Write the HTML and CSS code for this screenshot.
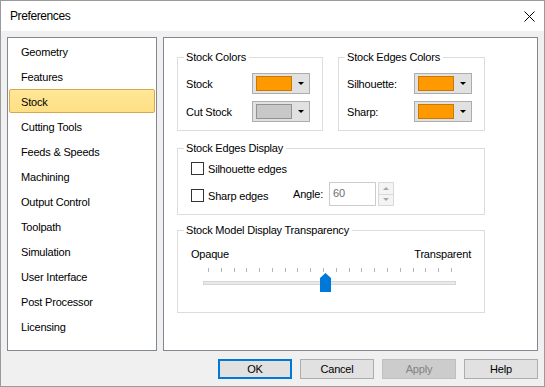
FILE: index.html
```html
<!DOCTYPE html>
<html>

<head>
    <meta charset="utf-8" />
    <title>Preferences</title>
    <link rel="stylesheet" href="styles.css">
</head>

<body>
    <div class="window">
        <div class="titlebar">
            <span class="title">Preferences</span>
            <svg class="close" width="11" height="11" viewBox="0 0 11 11">
                <path d="M0.5 0.5 L10.5 10.5 M10.5 0.5 L0.5 10.5" stroke="#000" stroke-width="1" fill="none" />
            </svg>
        </div>

        <div class="main">
            <ul class="nav">
                <li class="nav-item">Geometry</li>
                <li class="nav-item">Features</li>
                <li class="nav-item nav-item-active">Stock</li>
                <li class="nav-item">Cutting Tools</li>
                <li class="nav-item">Feeds &amp; Speeds</li>
                <li class="nav-item">Machining</li>
                <li class="nav-item">Output Control</li>
                <li class="nav-item">Toolpath</li>
                <li class="nav-item">Simulation</li>
                <li class="nav-item">User Interface</li>
                <li class="nav-item">Post Processor</li>
                <li class="nav-item">Licensing</li>
            </ul>

            <div class="pane">
                <div class="pane-row">
                    <div class="group group-colors">
                        <div class="group-title">Stock Colors</div>
                        <div class="field">
                            <span class="field-label">Stock</span>
                            <div class="color-pick"><span class="swatch swatch-orange"></span><span class="caret"></span></div>
                        </div>
                        <div class="field">
                            <span class="field-label">Cut Stock</span>
                            <div class="color-pick"><span class="swatch swatch-gray"></span><span class="caret"></span></div>
                        </div>
                    </div>

                    <div class="group group-colors group-edge-colors">
                        <div class="group-title">Stock Edges Colors</div>
                        <div class="field">
                            <span class="field-label">Silhouette:</span>
                            <div class="color-pick"><span class="swatch swatch-orange"></span><span class="caret"></span></div>
                        </div>
                        <div class="field">
                            <span class="field-label">Sharp:</span>
                            <div class="color-pick"><span class="swatch swatch-orange"></span><span class="caret"></span></div>
                        </div>
                    </div>
                </div>

                <div class="group group-display">
                    <div class="group-title">Stock Edges Display</div>
                    <label class="check">
                        <span class="check-box"></span>
                        <span>Silhouette edges</span>
                    </label>
                    <div class="angle-row">
                        <label class="check check-sharp">
                            <span class="check-box"></span>
                            <span>Sharp edges</span>
                        </label>
                        <span class="angle-label">Angle:</span>
                        <div class="angle-input">60</div>
                        <div class="spin">
                            <span class="spin-btn"><span class="spin-up"></span></span>
                            <span class="spin-btn"><span class="spin-down"></span></span>
                        </div>
                    </div>
                </div>

                <div class="group group-transparency">
                    <div class="group-title">Stock Model Display Transparency</div>
                    <div class="range-labels">
                        <span>Opaque</span>
                        <span>Transparent</span>
                    </div>
                    <div class="slider">
                        <div class="ticks">
                            <i></i><i></i><i></i><i></i><i></i><i></i><i></i><i></i><i></i><i></i>
                            <i></i><i></i><i></i><i></i><i></i><i></i><i></i><i></i><i></i><i></i>
                        </div>
                        <div class="track"></div>
                        <svg class="thumb" width="11" height="19" viewBox="0 0 11 19">
                            <path d="M5.5 0 L11 5 L11 19 L0 19 L0 5 Z" fill="#0078d7" />
                        </svg>
                    </div>
                </div>
            </div>
        </div>

        <div class="buttons">
            <button class="btn btn-default">OK</button>
            <button class="btn">Cancel</button>
            <button class="btn btn-disabled">Apply</button>
            <button class="btn">Help</button>
        </div>
    </div>
</body>

</html>
```

FILE: styles.css
```css
body {
    margin: 0;
    font-family: "Liberation Sans", Arial, sans-serif;
    font-size: 11px;
    letter-spacing: -0.2px;
    color: #000;
}

.window {
    width: 545px;
    height: 387px;
    box-sizing: border-box;
    border: 1px solid #9a9a9a;
    background-color: #f0f0f0;
}

.titlebar {
    height: 30px;
    display: flex;
    align-items: center;
    justify-content: space-between;
    padding: 0 9px 0 9px;
    background-color: #fff;
}

.title {
    font-size: 12px;
    letter-spacing: -0.4px;
}

.close {
    display: block;
}

.main {
    display: flex;
    gap: 6px;
    padding: 6px 6px 0 6px;
    height: 314px;
}

.nav {
    list-style: none;
    margin: 0;
    padding: 1px 1px 0 1px;
    width: 150px;
    box-sizing: border-box;
    border: 1px solid #828790;
    background-color: #fff;
}

.nav-item {
    height: 24px;
    line-height: 24px;
    margin-bottom: 1px;
    padding-left: 11px;
    border: 1px solid transparent;
    box-sizing: border-box;
    border-radius: 2px;
}

.nav-item-active {
    background: linear-gradient(#ffe797, #fedf84);
    border-color: #dba651;
}

.pane {
    width: 375px;
    box-sizing: border-box;
    border: 1px solid #828790;
    background-color: #fff;
    padding: 19px 0 0 13px;
}

.pane-row {
    display: flex;
    gap: 15px;
    margin-bottom: 17px;
}

.group {
    border: 1px solid #dcdcdc;
    box-sizing: border-box;
    width: 308px;
}

.group-title {
    display: table;
    line-height: 13px;
    margin: -7px 0 0 6px;
    padding: 0 3px 0 2px;
    background-color: #fff;
}

/* color groups */
.group-colors {
    width: 146px;
    padding: 0 0 8px 8px;
}

.group-edge-colors {
    width: 147px;
}

.group-colors .group-title {
    margin-left: -2px;
    margin-bottom: 9px;
}

.field {
    display: flex;
    align-items: center;
    height: 21px;
}

.field + .field {
    margin-top: 7px;
}

.field-label {
    width: 66px;
}

.group-edge-colors .field-label {
    width: 67px;
}

.color-pick {
    width: 58px;
    height: 21px;
    box-sizing: border-box;
    border: 1px solid #adadad;
    background-color: #e1e1e1;
    display: flex;
    align-items: center;
    padding-left: 3px;
}

.swatch {
    width: 36px;
    height: 15px;
    box-sizing: border-box;
    border: 1px solid;
}

.swatch-orange {
    background-color: #ff9900;
    border-color: #c67a08;
}

.swatch-gray {
    background-color: #c8c8c8;
    border-color: #929292;
}

.caret {
    margin-left: 6px;
    border-left: 3px solid transparent;
    border-right: 3px solid transparent;
    border-top: 3px solid #000;
}

/* edges display */
.group-display {
    padding: 0 0 8px 13px;
    margin-bottom: 15px;
}

.group-display .group-title {
    margin-left: -7px;
    margin-bottom: 7px;
}

.check {
    display: flex;
    align-items: center;
    height: 13px;
}

.check-box {
    width: 13px;
    height: 13px;
    box-sizing: border-box;
    border: 1px solid #333;
    background-color: #fff;
    margin-right: 4px;
}

.angle-row {
    display: flex;
    align-items: center;
    height: 24px;
    margin-top: 7px;
}

.check-sharp {
    width: 102px;
    margin-top: 3px;
}

.angle-label {
    width: 36px;
}

.angle-input {
    width: 47px;
    height: 24px;
    box-sizing: border-box;
    border: 1px solid #cccccc;
    background-color: #fff;
    color: #6d6d6d;
    line-height: 20px;
    padding-left: 3px;
}

.spin {
    margin-left: 2px;
    width: 16px;
    height: 24px;
    display: flex;
    flex-direction: column;
}

.spin-btn {
    flex: 1;
    border: 1px solid #d9d9d9;
    background-color: #f4f4f4;
    display: flex;
    align-items: center;
    justify-content: center;
}

.spin-btn + .spin-btn {
    border-top: none;
}

.spin-up {
    border-left: 3px solid transparent;
    border-right: 3px solid transparent;
    border-bottom: 3px solid #a8a8a8;
}

.spin-down {
    border-left: 3px solid transparent;
    border-right: 3px solid transparent;
    border-top: 3px solid #a8a8a8;
}

/* transparency */
.group-transparency {
    padding: 0 13px 20px 13px;
}

.group-transparency .group-title {
    margin-left: -7px;
    margin-bottom: 11px;
}

.range-labels {
    display: flex;
    justify-content: space-between;
    line-height: 13px;
}

.slider {
    position: relative;
    height: 24px;
    margin: 7px 15px 0 12px;
}

.ticks {
    display: flex;
    justify-content: space-between;
    padding: 0 4px 0 5px;
    height: 4px;
}

.ticks i {
    width: 1px;
    height: 4px;
    background-color: #b4b4b4;
}

.track {
    margin-top: 9px;
    height: 4px;
    box-sizing: border-box;
    border: 1px solid #d6d6d6;
    background-color: #e7eae9;
}

.thumb {
    position: absolute;
    left: 117px;
    top: 5px;
}

/* buttons */
.buttons {
    display: flex;
    justify-content: flex-end;
    gap: 8px;
    padding: 8px 6px 0 0;
}

.btn {
    width: 74px;
    height: 20px;
    box-sizing: border-box;
    border: 1px solid #adadad;
    background-color: #e1e1e1;
    font-family: "Liberation Sans", Arial, sans-serif;
    font-size: 11px;
    letter-spacing: -0.2px;
    color: #000;
    padding: 0;
}

.btn-default {
    border: 2px solid #0078d7;
}

.btn-disabled {
    background-color: #cccccc;
    border-color: #bfbfbf;
    color: #838383;
}
```
